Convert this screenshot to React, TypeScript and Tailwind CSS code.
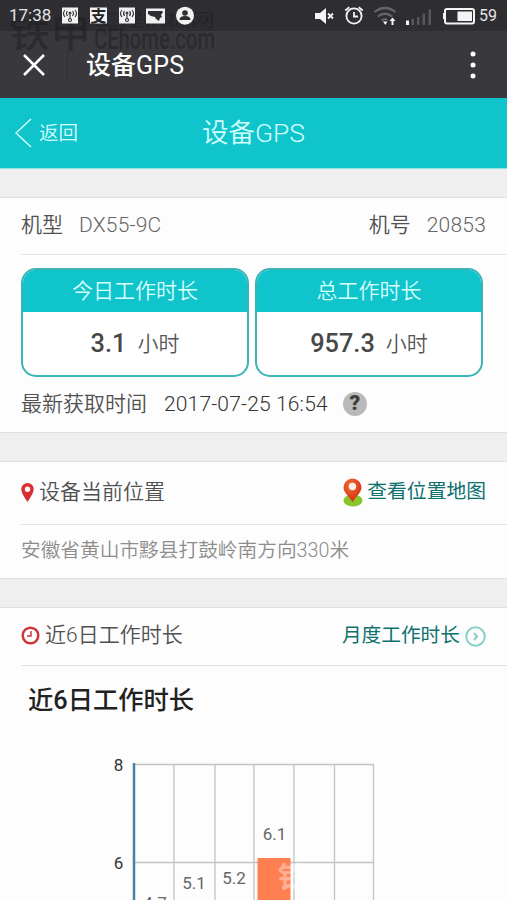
import React from 'react';

const days = [
  { hours: 4.7, labelX: 155 },
  { hours: 5.1, labelX: 194 },
  { hours: 5.2, labelX: 234 },
  { hours: 6.1, labelX: 274.5 },
];

const gridLines = [174, 215, 254, 294, 334.5, 373.5];

const StatusBar: React.FC = () => (
  <div className="flex h-[31px] items-center bg-[#2e2d31] text-[#e4e4e6]">
    <span className="relative z-10 ml-[9px] w-[53px] text-[17px] leading-none">17:38</span>
    <svg width="140" height="20" viewBox="0 0 140 20" className="relative z-10 shrink-0">
      {[0, 57].map((x) => (
        <g key={x} transform={`translate(${x} 0)`}>
          <rect y="1.500" width="16" height="16" fill="#f1f1f1" />
          <g fill="none" stroke="#2e2d31" strokeWidth="1.1">
            <path d="M3 4q-3 3.500 0 7M5.500 5q-2 2.500 0 5M13 4q3 3.500 0 7M10.500 5q2 2.500 0 5" />
            <path d="M8 8.500v4" />
            <circle cx="8" cy="7.300" r="0.900" />
            <circle cx="8" cy="14" r="1.500" />
          </g>
        </g>
      ))}
      <rect x="28" y="1.500" width="17" height="16" fill="#f1f1f1" />
      <text x="28.500" y="15.500" fontSize="16" fontWeight="700" fill="#242327">支</text>
      <rect x="84" y="2.500" width="19" height="15" fill="#f1f1f1" />
      <path d="M86 5h14l1 1-2 3 1 2-2 1-1 3-3-2-1-2-4-1-3-2z" fill="#2e2d31" />
      <circle cx="123" cy="9.700" r="9" fill="#f1f1f1" />
      <circle cx="123" cy="7" r="2.800" fill="#2e2d31" />
      <path d="M117.500 14q0-4 5.500-4t5.500 4z" fill="#2e2d31" />
    </svg>
    <svg width="164" height="22" viewBox="0 0 164 22" className="ml-auto shrink-0">
      <path d="M1 8h5l6-5v16l-6-5H1z" fill="#f4f4f4" />
      <path d="m14 8.500 5 5m0-5-5 5" stroke="#f4f4f4" strokeWidth="1.800" />
      <g fill="none" stroke="#f4f4f4" strokeWidth="1.800">
        <circle cx="40" cy="11" r="7.600" />
        <path d="M40 7v4.500h4M31.300 5.500l4-3.300M48.700 5.500l-4-3.300" />
      </g>
      <g fill="none" stroke="#66656a" strokeWidth="2.200">
        <path d="M60.500 7q10.500-8 21 0M64 11.500q7-5.500 14 0M67.500 15.500q3-2.500 5.500-0.500" />
      </g>
      <path d="M69 16.500h4.500l-2.200 3.500zM75.500 16l3-3.500 3 3.500h-2v4h-2v-4z" fill="#f4f4f4" />
      <path d="M92 15.500h3V20h-3z" fill="#f4f4f4" />
      <path d="M97.500 14h2.500v6h-2.500zM103 12h2.500v8H103zM108.500 8.500h2.500V20h-2.500zM114.500 4.500h2.500V20h-2.500z" fill="#58575c" />
      <rect x="131" y="4" width="29" height="14.500" rx="2" fill="none" stroke="#f4f4f4" strokeWidth="2" />
      <path d="M129 8h2v6h-2zM143.500 6.500H158v9.500h-14.500z" fill="#f4f4f4" />
    </svg>
    <span className="mr-[10px] ml-[1px] text-[16px] leading-none">59</span>
  </div>
);

const Watermark: React.FC = () => (
  <svg width="220" height="56" viewBox="0 0 220 56" className="pointer-events-none absolute top-0 left-0">
    <g fill="#1b1a1e" fillOpacity="0.45">
      <text x="9" y="47" fontSize="38" fontWeight="500" textLength="82" lengthAdjust="spacingAndGlyphs">铁甲</text>
      <text x="94" y="48.500" fontSize="29" fontWeight="500" textLength="121" lengthAdjust="spacingAndGlyphs">CEhome.com</text>
      <text x="94" y="26" fontSize="17" fontWeight="400" textLength="121" lengthAdjust="spacingAndGlyphs">工程机械网</text>
    </g>
  </svg>
);

const TitleBar: React.FC = () => (
  <div className="flex h-[67px] items-center bg-[#39383d] text-white">
    <svg width="22" height="22" viewBox="0 0 22 22" className="ml-[23px]">
      <path d="m1 1 20 20M21 1 1 21" stroke="currentColor" strokeWidth="2.500" />
    </svg>
    <div className="ml-[22px] h-[30px] w-px bg-[#303034]" />
    <h1 className="relative z-10 mt-[2px] ml-[18px] text-[25px] leading-none font-medium">设备<span className="font-normal tracking-[0.2px]">GPS</span></h1>
    <svg width="6" height="28" viewBox="0 0 6 28" className="mr-[31px] ml-auto" fill="currentColor">
      <circle cx="3" cy="3" r="2.500" />
      <circle cx="3" cy="14" r="2.500" />
      <circle cx="3" cy="25" r="2.500" />
    </svg>
  </div>
);

const HoursCard: React.FC<{ title: string; value: string }> = ({ title, value }) => (
  <div className="h-[109px] w-[228px] overflow-hidden rounded-[15px] border-2 border-[#3cb3b5] bg-white">
    <div className="flex h-[42px] items-center justify-center bg-[#10c4cb] pt-[2px] text-[21px] font-[350] text-[#d8ffff]">{title}</div>
    <div className="flex h-[63px] items-center justify-center gap-[11px]">
      <span className="text-[25.300px] font-medium text-[#484848]">{value}</span>
      <span className="pt-[2px] text-[21px] font-[350] text-[#555]">小时</span>
    </div>
  </div>
);

const App: React.FC = () => {
  return (
    <div className="relative h-[900px] w-[507px] overflow-hidden bg-[#efefef] font-[Roboto,'Noto_Sans_CJK_SC',sans-serif]">
      <StatusBar />
      <TitleBar />
      <Watermark />

      <header className="grid h-[71px] grid-cols-3 items-center border-b border-[#8fe2e5] bg-[#10c4cb] text-[#d5ffff]">
        <div className="flex items-center">
          <svg width="17" height="30" viewBox="0 0 17 30" className="ml-[15px]" fill="none">
            <path d="M16 1 1 15l15 14" stroke="currentColor" strokeWidth="1.400" />
          </svg>
          <span className="mt-[2px] ml-[7px] text-[19.500px] font-[350]">返回</span>
        </div>
        <h2 className="text-center text-[26.500px] leading-none font-[350]">设备GPS</h2>
      </header>

      {/* Machine info */}
      <section className="mt-[28px] h-[236px] border-y border-[#e0e0e0] bg-[#fdfdfd] text-[#505050]">
        <div className="ml-[21px] flex h-[57px] items-center border-b border-[#e4e4e4] pr-[21px] text-[21px] font-[350]">
          <span>机型</span>
          <span className="ml-[16px] tracking-[0.2px] text-[#666]">DX55-9C</span>
          <span className="ml-auto">机号</span>
          <span className="ml-[16px] tracking-[0.2px] text-[#666]">20853</span>
        </div>
        <div className="mt-[13px] ml-[21px] flex gap-[6px]">
          <HoursCard title="今日工作时长" value="3.1" />
          <HoursCard title="总工作时长" value="957.3" />
        </div>
        <div className="ml-[21px] flex h-[54px] items-center text-[21px] font-[350]">
          <span className="pt-px">最新获取时间</span>
          <span className="ml-[17px] pt-px tracking-[0.15px] text-[#333]">2017-07-25 16:54</span>
          <span className="ml-[15px] flex h-6 w-6 items-center justify-center rounded-full bg-[#b9b9b9] text-[21px] font-black text-[#3c3c3c]">?</span>
        </div>
      </section>

      {/* Current location */}
      <section className="mt-[28px] h-[118px] border-y border-[#e0e0e0] bg-[#fdfdfd]">
        <div className="ml-[21px] flex h-[63px] items-center border-b border-[#e4e4e4] pr-[21px]">
          <svg width="13" height="19" viewBox="0 0 13 19" className="mb-px">
            <path d="M6.500 0A6.200 6.200 0 0 0 .3 6.200C.3 10 4 15 6.500 19 9 15 12.700 10 12.700 6.200A6.200 6.200 0 0 0 6.500 0Zm0 3.500a2.700 2.700 0 1 1 0 5.400 2.700 2.700 0 0 1 0-5.400Z" fill="#d93035" />
          </svg>
          <span className="ml-[5px] text-[21px] font-[350] text-[#505050]">设备当前位置</span>
          <svg width="20" height="29" viewBox="0 0 20 29" className="mb-px ml-auto">
            <defs>
              <radialGradient id="pin" cx="0.400" cy="0.300" r="0.700">
                <stop offset="0" stopColor="#f2703a" />
                <stop offset="1" stopColor="#d22b10" />
              </radialGradient>
            </defs>
            <ellipse cx="10" cy="22.500" rx="9.500" ry="6" fill="#88c52d" />
            <path d="M9.500 0.500a9 9 0 0 0-9 9c0 5 5.500 9 9 14.500 3.500-5.500 9-9.500 9-14.500a9 9 0 0 0-9-9Z" fill="url(#pin)" />
            <circle cx="9.500" cy="8.500" r="3.700" fill="#f8eee8" />
          </svg>
          <span className="mb-[2px] ml-[4px] text-[19.800px] text-[#0d716e]">查看位置地图</span>
        </div>
        <p className="ml-[21px] flex h-[52px] items-center text-[19.700px] font-[350] text-[#8c8c8c]">安徽省黄山市黟县打鼓岭南方向330米</p>
      </section>

      {/* Last six days */}
      <section className="mt-[28px] h-[293px] border-t border-[#e0e0e0] bg-[#fdfdfd]">
        <div className="ml-[21px] flex h-[58px] items-center border-b border-[#e0e0e0] pr-[21px]">
          <svg width="19" height="19" viewBox="0 0 19 19" fill="none" stroke="#cc373c" className="mb-[2px]">
            <circle cx="9.500" cy="9.500" r="7.800" strokeWidth="2.500" />
            <path d="M10 5v5H6" strokeWidth="1.500" />
          </svg>
          <span className="mb-[1px] ml-[5px] text-[21px] font-[350] text-[#505050]">近6日工作时长</span>
          <span className="mb-[2px] ml-auto text-[19.700px] text-[#0d716e]">月度工作时长</span>
          <svg width="21" height="21" viewBox="0 0 21 21" className="ml-[5px]" fill="none" stroke="#88d0c9" strokeWidth="2">
            <circle cx="10.500" cy="10.500" r="9.300" />
            <path d="m9 7 3 3.500L9 14" />
          </svg>
        </div>
        <h3 className="mt-[15px] ml-[28px] h-[40px] text-[25.300px] leading-[40px] font-medium text-[#222]">近6日工作时长</h3>

        <svg width="507" height="160" viewBox="0 740 507 160" className="mt-[19px] block">
          <g stroke="#c4c4c4" strokeWidth="1.300">
            <path d="M134 764.500h240M134 862.500h240" />
            {gridLines.map((x) => (
              <path key={x} d={`M${x} 764V900`} />
            ))}
          </g>
          <path d="M134 763V900" stroke="#4682a5" strokeWidth="2.500" />
          <rect x="257.500" y="858" width="33" height="42" fill="#ff7f50" />
          <text x="278" y="888" fontSize="29" fontWeight="700" fill="#fff" fillOpacity="0.400">铁</text>
          <g fontSize="17" textAnchor="middle" fill="#333">
            <text x="118.500" y="770.500">8</text>
            <text x="118.500" y="868.500">6</text>
          </g>
          <g fontSize="17" textAnchor="middle" fill="#666">
            {days.map((day) => (
              <text key={day.hours} x={day.labelX} y={840 + (6.1 - day.hours) * 49}>{day.hours.toFixed(1)}</text>
            ))}
          </g>
        </svg>
      </section>
    </div>
  );
};

export default App;
